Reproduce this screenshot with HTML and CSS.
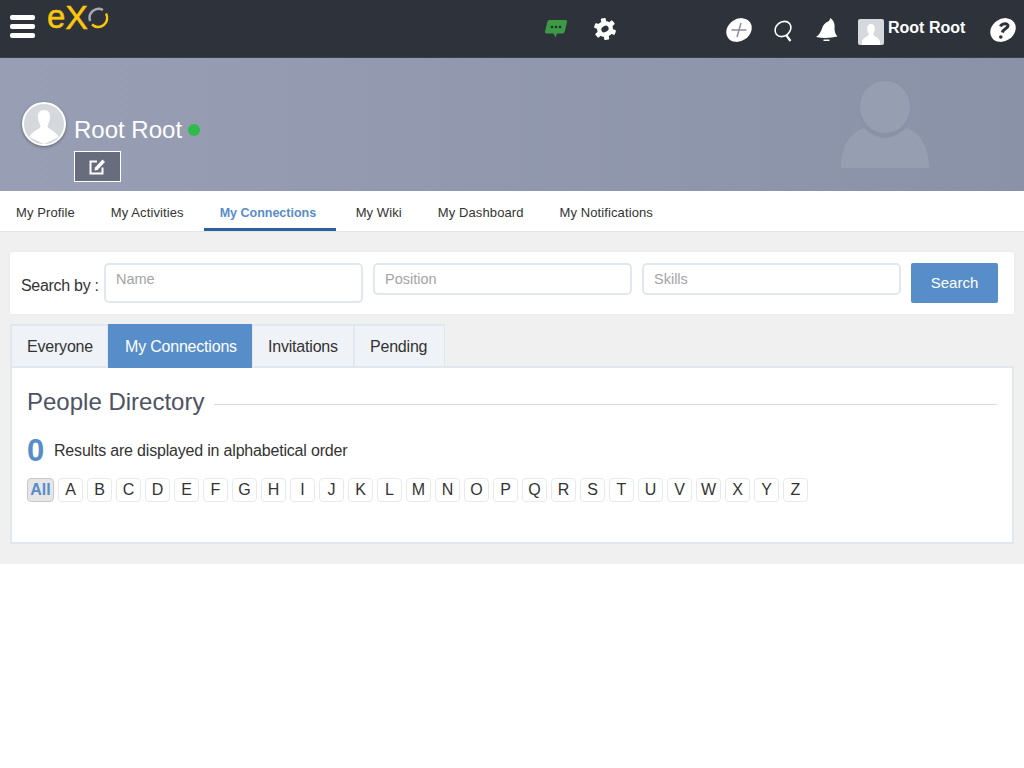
FILE: index.html
```html
<!DOCTYPE html>
<html lang="en">
<head>
    <meta charset="UTF-8">
    <meta name="viewport" content="width=device-width, initial-scale=1.0">
    <title>My Connections</title>
    <link rel="stylesheet" href="styles.css">
</head>
<body>
    <header class="topbar">
        <div class="topbar-left">
            <div class="burger"><span></span><span></span><span></span></div>
            <div class="logo">
                <span class="logo-e">e</span><span class="logo-x">X</span>
                <svg class="logo-o" width="21" height="22" viewBox="0 0 21 22">
                    <path d="M18 6.500A9 9 0 0 1 4 17.500" fill="none" stroke="#fbc60c" stroke-width="2.500"/>
                    <path d="M2.200 14A9 9 0 0 1 15 3" fill="none" stroke="#a5a9ae" stroke-width="2.500"/>
                </svg>
            </div>
        </div>
        <div class="topbar-mid">
            <svg class="icon-chat" width="24" height="22" viewBox="0 0 24 22">
                <path d="M5.500 2H21.500Q23.500 2 23 4L20.800 13.500Q20.300 15.500 18.300 15.500H13L11.500 19.500L9.500 15.500H2.500Q.5 15.500 1 13.500L3.300 4Q3.800 2 5.500 2Z" fill="#3d9a44"/>
                <circle cx="8" cy="9" r="1.300" fill="#24322e"/>
                <circle cx="12" cy="9" r="1.300" fill="#24322e"/>
                <circle cx="16" cy="9" r="1.300" fill="#24322e"/>
            </svg>
            <svg class="icon-gear" width="24" height="24" viewBox="0 0 24 24">
                <g transform="rotate(-10 12 12)" fill="#fff">
                    <rect x="9.500" y="1" width="5" height="22" rx="1"/>
                    <rect x="9.500" y="1" width="5" height="22" rx="1" transform="rotate(60 12 12)"/>
                    <rect x="9.500" y="1" width="5" height="22" rx="1" transform="rotate(120 12 12)"/>
                </g>
                <circle cx="12" cy="12" r="8" fill="#fff"/>
                <ellipse cx="12" cy="12" rx="3.800" ry="3" fill="#2d323b" transform="rotate(-30 12 12)"/>
            </svg>
        </div>
        <div class="topbar-right">
            <svg class="icon-plus" width="26" height="26" viewBox="0 0 26 26">
                <ellipse cx="13" cy="13" rx="13.500" ry="11" fill="#fff" transform="rotate(-35 13 13)"/>
                <path d="M15 6L11 20M5.500 13H20.500" stroke="#8a8f98" stroke-width="1.500" fill="none"/>
            </svg>
            <svg class="icon-search" width="22" height="24" viewBox="0 0 22 24">
                <ellipse cx="10" cy="10" rx="8.500" ry="7" fill="none" stroke="#fff" stroke-width="1.600" transform="rotate(-40 10 10)"/>
                <path d="M13.500 16.500L17.500 22" stroke="#fff" stroke-width="2.200" fill="none"/>
            </svg>
            <svg class="icon-bell" width="24" height="26" viewBox="0 0 24 26">
                <path d="M15.500 1L17.500 3Q20 6 19.500 11Q19.300 16 22.500 19.500Q12 22 1 20Q5 17.500 7 11.500Q8.500 6 14 4Z" fill="#fff"/>
                <path d="M8.500 22.500H14.500V24H8.500Z" fill="#fff"/>
            </svg>
            <div class="user">
                <div class="user-pic">
                    <svg width="26" height="26" viewBox="0 0 26 26">
                        <path d="M13 5C10 5 9 7.500 9.200 10C9.400 12.500 10.500 14 10.800 15C11 17 6 18 4 22V26H22V22C20 18 15 17 15.200 15C15.500 14 16.600 12.500 16.800 10C17 7.500 16 5 13 5Z" fill="#fff"/>
                    </svg>
                </div>
                <span class="user-name">Root Root</span>
            </div>
            <svg class="icon-help" width="26" height="26" viewBox="0 0 26 26">
                <ellipse cx="13" cy="13" rx="13.500" ry="11" fill="#fff" transform="rotate(-35 13 13)"/>
                <path d="M10.500 9.500C11.500 6.500 18.500 5.500 18 9C17.600 11.500 13.500 11.500 12.300 15.500" fill="none" stroke="#2d323b" stroke-width="3"/>
                <circle cx="10.800" cy="20" r="1.800" fill="#2d323b"/>
            </svg>
        </div>
    </header>

    <section class="banner">
        <div class="profile">
            <div class="profile-row">
                <div class="avatar">
                    <svg width="40" height="40" viewBox="0 0 40 40">
                        <path d="M20 6C15.500 6 13.500 9.500 14 14C14.400 18 16 20 16.500 22C17 25 9 26 5 33L20 40L35 33C31 26 23 25 23.500 22C24 20 25.600 18 26 14C26.500 9.500 24.500 6 20 6Z" fill="#fff"/>
                    </svg>
                </div>
                <span class="profile-name">Root Root</span>
                <span class="status-dot"></span>
            </div>
            <button class="edit-btn">
                <svg width="18" height="18" viewBox="0 0 18 18">
                    <path d="M9 3.500H2.500V15.500H14.500V9.500" fill="none" stroke="#fff" stroke-width="2"/>
                    <path d="M7 9.500L14.500 1.500L17 4L9.500 12L6.500 12.500Z" fill="#fff"/>
                </svg>
            </button>
        </div>
        <svg class="ghost" width="88" height="88" viewBox="0 0 88 88">
            <path d="M0 87C0 65 10 50 23 47C30 55 58 55 65 47C78 50 88 65 88 87Z" fill="#969eb1"/>
            <ellipse cx="44" cy="29" rx="26" ry="28" fill="#8a92a6"/>
            <ellipse cx="44" cy="26" rx="25" ry="26" fill="#969eb1"/>
        </svg>
    </section>

    <nav class="subnav">
        <a class="subnav-link">My Profile</a>
        <a class="subnav-link">My Activities</a>
        <a class="subnav-link active">My Connections</a>
        <a class="subnav-link">My Wiki</a>
        <a class="subnav-link">My Dashboard</a>
        <a class="subnav-link">My Notifications</a>
    </nav>

    <main class="content">
        <form class="search-card">
            <label class="search-label">Search by :</label>
            <input class="search-input tall" type="text" placeholder="Name">
            <input class="search-input" type="text" placeholder="Position">
            <input class="search-input" type="text" placeholder="Skills">
            <button class="search-btn" type="button">Search</button>
        </form>

        <div class="tabs">
            <a class="tab">Everyone</a>
            <a class="tab active">My Connections</a>
            <a class="tab">Invitations</a>
            <a class="tab">Pending</a>
        </div>

        <section class="panel">
            <div class="panel-title">
                <h2>People Directory</h2>
                <span class="title-line"></span>
            </div>
            <div class="results">
                <strong class="results-count">0</strong>
                <span>Results are displayed in alphabetical order</span>
            </div>
            <div class="letters">
                <a class="letter all">All</a>
                <a class="letter">A</a>
                <a class="letter">B</a>
                <a class="letter">C</a>
                <a class="letter">D</a>
                <a class="letter">E</a>
                <a class="letter">F</a>
                <a class="letter">G</a>
                <a class="letter">H</a>
                <a class="letter">I</a>
                <a class="letter">J</a>
                <a class="letter">K</a>
                <a class="letter">L</a>
                <a class="letter">M</a>
                <a class="letter">N</a>
                <a class="letter">O</a>
                <a class="letter">P</a>
                <a class="letter">Q</a>
                <a class="letter">R</a>
                <a class="letter">S</a>
                <a class="letter">T</a>
                <a class="letter">U</a>
                <a class="letter">V</a>
                <a class="letter">W</a>
                <a class="letter">X</a>
                <a class="letter">Y</a>
                <a class="letter">Z</a>
            </div>
        </section>
    </main>
</body>
</html>
```

FILE: styles.css
```css
* {
    box-sizing: border-box;
}

body {
    margin: 0;
    background-color: #ffffff;
    color: #333333;
    font-family: "Liberation Sans", Arial, sans-serif;
    font-size: 16px;
}

/* barra superior */
.topbar {
    display: flex;
    height: 58px;
    background-color: #2d323b;
    border-bottom: 1px solid #3a3f4a;
}

.topbar-left {
    display: flex;
    width: 544px;
    padding-left: 10px;
}

.burger {
    display: flex;
    flex-direction: column;
    gap: 4px;
    width: 25px;
    margin-top: 15px;
}

.burger span {
    display: block;
    height: 5px;
    background-color: #ffffff;
    border-radius: 2px;
}

.logo {
    display: flex;
    align-items: flex-start;
    height: 36px;
    margin-left: 12px;
    color: #fbc60c;
    font-size: 33px;
    line-height: 34px;
    -webkit-text-stroke: 0.5px #fbc60c;
}

.logo-x {
    font-size: 34px;
}

.logo-o {
    margin-top: 7px;
}

.topbar-mid {
    display: flex;
    width: 182px;
    gap: 25px;
    padding-top: 17px;
}

.icon-chat {
    margin-top: 1px;
}

.topbar-right {
    display: flex;
    flex: 1;
    align-items: flex-start;
    padding-top: 17px;
}

.icon-search {
    margin-left: 21px;
    margin-top: 2px;
}

.icon-bell {
    margin-left: 20px;
}

.user {
    display: flex;
    margin-left: 19px;
    margin-top: 2px;
}

.user-pic {
    width: 26px;
    height: 26px;
    background-color: #d5d8dc;
    border-radius: 2px;
    overflow: hidden;
}

.user-name {
    margin-left: 4px;
    color: #ffffff;
    font-size: 16px;
    font-weight: bold;
    line-height: 18px;
}

.icon-help {
    margin-left: 25px;
}

/* banner do perfil */
.banner {
    display: flex;
    justify-content: space-between;
    height: 133px;
    background: linear-gradient(to right, #989fb4, #8a92a7);
    padding: 44px 95px 0 22px;
}

.profile-row {
    display: flex;
    align-items: flex-start;
}

.avatar {
    display: flex;
    align-items: flex-end;
    justify-content: center;
    width: 44px;
    height: 44px;
    background-color: #d5d8dc;
    border: 2px solid #ffffff;
    border-radius: 50%;
    box-shadow: 0 1px 3px rgba(0, 0, 0, 0.4);
    overflow: hidden;
}

.profile-name {
    margin-left: 8px;
    margin-top: 13px;
    color: #ffffff;
    font-size: 24px;
    line-height: 29px;
}

.status-dot {
    width: 12px;
    height: 12px;
    margin-left: 6px;
    margin-top: 22px;
    background-color: #2fbb4a;
    border-radius: 50%;
}

.edit-btn {
    display: flex;
    align-items: center;
    justify-content: center;
    width: 47px;
    height: 31px;
    margin-left: 52px;
    margin-top: 5px;
    padding: 0 2px 0 0;
    background-color: #686d7d;
    border: 1px solid #ffffff;
}

.ghost {
    margin-top: -21px;
}

/* menu do perfil */
.subnav {
    display: flex;
    gap: 4px;
    height: 41px;
    background-color: #ffffff;
    border-bottom: 1px solid #e3e5e8;
}

.subnav-link {
    height: 40px;
    padding: 14px 16px 0;
    border-bottom: 3px solid transparent;
    color: #333333;
    font-size: 13px;
    line-height: 16px;
    letter-spacing: 0.1px;
    white-space: nowrap;
}

.subnav-link.active {
    width: 132px;
    color: #578dc9;
    font-size: 12.500px;
    font-weight: bold;
    letter-spacing: 0;
    border-bottom-color: #2f5e9e;
}

.content {
    height: 332px;
    padding: 20px 10px 0;
    background-color: #f0f0f0;
}

/* busca */
.search-card {
    display: flex;
    align-items: flex-start;
    height: 62px;
    margin-bottom: 10px;
    padding: 11px 15px 0 11px;
    background-color: #ffffff;
    border-radius: 2px;
    box-shadow: 0 0 2px #dfe3e8;
}

.search-label {
    width: 83px;
    margin-top: 14px;
    font-size: 16px;
    line-height: 18px;
    letter-spacing: -0.3px;
}

.search-input {
    width: 259px;
    height: 32px;
    margin-right: 10px;
    padding: 0 10px;
    background-color: #ffffff;
    border: 2px solid #e1e7ee;
    border-radius: 5px;
    font-family: inherit;
    font-size: 14.500px;
    color: #333333;
}

.search-input::placeholder {
    color: #a4a4a4;
}

.search-input.tall {
    height: 40px;
    padding-bottom: 8px;
}

.search-btn {
    width: 87px;
    height: 40px;
    padding: 0 0 2px;
    background-color: #578dc9;
    border: none;
    border-radius: 2px;
    color: #ffffff;
    font-family: inherit;
    font-size: 15px;
}

/* abas */
.tabs {
    display: flex;
    height: 44px;
}

.tab {
    padding: 11px 0 0 15px;
    background-color: #eff2f6;
    border: 2px solid #e1e7ee;
    border-left-width: 1px;
    border-right-width: 1px;
    color: #333333;
    font-size: 16px;
    line-height: 20px;
    letter-spacing: -0.2px;
}

.tab:nth-child(1) {
    width: 98px;
    border-left-width: 2px;
}

.tab:nth-child(3) {
    width: 102px;
}

.tab:nth-child(4) {
    width: 91px;
}

.tab.active {
    width: 144px;
    padding: 13px 0 0 17px;
    background-color: #578dc9;
    border: none;
    color: #ffffff;
}

.panel {
    height: 178px;
    margin-top: -2px;
    padding: 20px 15px 0 15px;
    background-color: #ffffff;
    border: 2px solid #e1e7ee;
}

.panel-title {
    display: flex;
    align-items: center;
}

.panel-title h2 {
    margin: 0 10px 0 0;
    color: #4e5362;
    font-size: 24px;
    font-weight: normal;
    line-height: 28px;
}

.title-line {
    flex: 1;
    height: 1px;
    margin-top: 4px;
    background-color: #d8dbdf;
}

.results {
    display: flex;
    align-items: center;
    height: 36px;
    margin-top: 17px;
    font-size: 16px;
    letter-spacing: -0.19px;
}

.results-count {
    width: 27px;
    color: #578dc9;
    font-size: 31px;
}

.letters {
    display: flex;
    gap: 4px;
    margin-top: 9px;
}

.letter {
    width: 25px;
    height: 24px;
    border: 1px solid #e6eaef;
    border-radius: 4px;
    background-color: #ffffff;
    color: #333333;
    font-size: 16px;
    line-height: 22px;
    text-align: center;
}

.letter.all {
    width: 27px;
    background-color: #e6e6e6;
    border-color: #c8c8c8;
    color: #578dc9;
    font-weight: bold;
}
```
